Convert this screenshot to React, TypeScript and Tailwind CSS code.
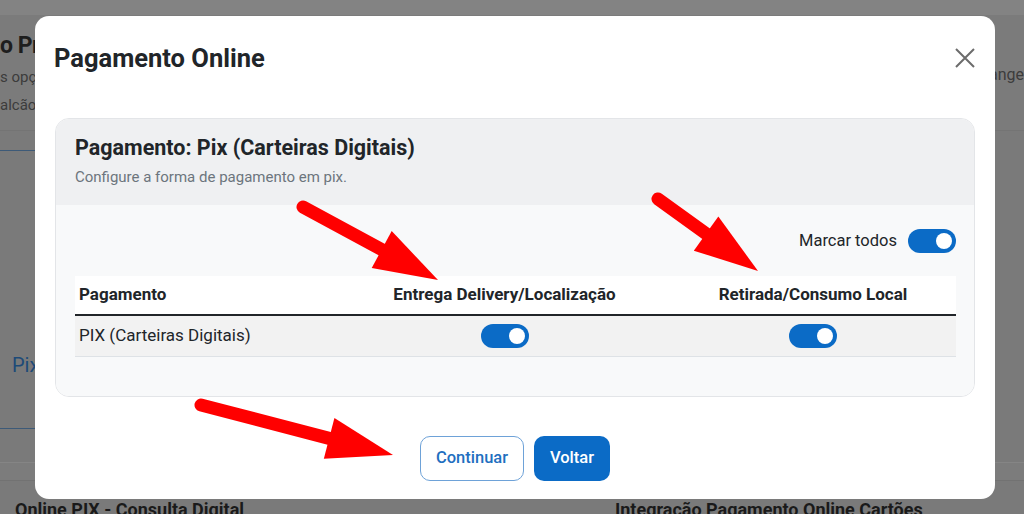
import React from "react";

type Pt = [number, number];

function Arrow({ tail, tip, headLen, headHalf, width }: { tail: Pt; tip: Pt; headLen: number; headHalf: number; width: number }) {
  const dx = tip[0] - tail[0];
  const dy = tip[1] - tail[1];
  const len = Math.hypot(dx, dy);
  const ux = dx / len;
  const uy = dy / len;
  const px = -uy;
  const py = ux;
  const bx = tip[0] - ux * headLen;
  const by = tip[1] - uy * headLen;
  const p1: Pt = [bx + px * headHalf, by + py * headHalf];
  const p2: Pt = [bx - px * headHalf, by - py * headHalf];
  const sx = bx + ux * 4;
  const sy = by + uy * 4;
  return (
    <g>
      <line x1={tail[0]} y1={tail[1]} x2={sx} y2={sy} stroke="#ff0000" strokeWidth={width} strokeLinecap="round" />
      <polygon points={`${tip[0]},${tip[1]} ${p1[0]},${p1[1]} ${p2[0]},${p2[1]}`} fill="#ff0000" />
    </g>
  );
}

function Toggle() {
  return (
    <div className="w-[48px] h-[24px] rounded-full bg-[#0b6bc6] flex items-center justify-end pr-[4px]">
      <div className="w-[16px] h-[16px] rounded-full bg-white" />
    </div>
  );
}

export default function App() {
  return (
    <div className="relative w-[1024px] h-[514px] overflow-hidden bg-[#7a7a7a] font-['Roboto',sans-serif]">
      {/* background page */}
      <div className="h-[15px] bg-[#838383]" />
      <div className="h-[116px] flex justify-between bg-[#7b7b7b] border-b border-[#747474]">
        <div className="pt-[16px]">
          <div className="text-[23px] leading-[30px] font-bold text-[#1e1e1e] tracking-[-0.5px]">o Pr</div>
          <div className="text-[15px] leading-[24px] text-[#3c3c3c] mt-[4px]">s opçõ</div>
          <div className="text-[15px] leading-[24px] text-[#3c3c3c] mt-[4px]">alcão</div>
        </div>
        <div className="pt-[48px] text-[16px] leading-[24px] text-[#3c3c3c]">ange</div>
      </div>
      <div className="h-[331px] bg-[#7a7a7a]">
        <div className="h-[19px]" />
        <div className="h-px bg-[#3d5a78] w-[60px]" />
        <div className="h-[200px]" />
        <div className="pl-[12px] text-[20px] leading-[28px] text-[#1d4a78]">Pix</div>
        <div className="h-[49px]" />
        <div className="h-px bg-[#3d5a78] w-[60px]" />
      </div>
      <div className="h-[18px] border-t border-[#858585] bg-[#7c7c7c]" />
      <div className="flex h-[34px] border-t border-[#727272]">
        <div className="w-[575px] bg-[#7a7a7a] pl-[15px] pt-[18px] text-[18px] font-bold text-[#1a1a1a] leading-[22px]">Online PIX - Consulta Digital</div>
        <div className="w-[20px]" />
        <div className="flex-1 bg-[#7a7a7a] pl-[20px] pt-[18px] text-[18px] font-bold text-[#1a1a1a] leading-[22px]">Integração Pagamento Online Cartões</div>
      </div>

      {/* modal */}
      <div className="absolute left-[35px] top-[16px] w-[960px] h-[483px] bg-white rounded-[14px] flex flex-col">
        <div className="flex justify-between pl-[19px] pr-[20px] pt-[26px] h-[76px] items-start">
          <div className="text-[25.5px] leading-[32px] font-bold text-[#212529]">Pagamento Online</div>
          <svg width="20" height="20" viewBox="0 0 20 20" className="mt-[6px]">
            <path d="M1 1 L19 19 M19 1 L1 19" stroke="#6c6c6c" strokeWidth="2" />
          </svg>
        </div>
        <div className="px-[20px] pt-[26px]">
          <div className="rounded-[14px] border border-[#e3e5e8] overflow-hidden">
            <div className="bg-[#eff0f2] pl-[19px] pt-[15px] h-[86px]">
              <div className="text-[21.5px] leading-[28px] font-bold text-[#212529]">Pagamento: Pix (Carteiras Digitais)</div>
              <div className="text-[15px] leading-[20px] text-[#6c757d] mt-[5px]">Configure a forma de pagamento em pix.</div>
            </div>
            <div className="bg-[#f8f9fa] pl-[19px] pr-[18px] pt-[24px] pb-[39px]">
              <div className="flex justify-end items-center gap-[11px]">
                <span className="text-[16.5px] leading-[24px] text-[#212529]">Marcar todos</span>
                <Toggle />
              </div>
              <div className="mt-[23px]">
                <div className="grid grid-cols-[264px_331px_286px] h-[40px] bg-white border-b-2 border-[#212529] items-center text-[17px] font-bold text-[#212529]">
                  <div className="pl-[4px]">Pagamento</div>
                  <div className="text-center">Entrega Delivery/Localização</div>
                  <div className="text-center">Retirada/Consumo Local</div>
                </div>
                <div className="grid grid-cols-[264px_331px_286px] h-[41px] bg-[#f2f2f2] border-b border-[#dee2e6] items-center text-[17px] text-[#212529]">
                  <div className="pl-[4px]">PIX (Carteiras Digitais)</div>
                  <div className="flex justify-center"><Toggle /></div>
                  <div className="flex justify-center"><Toggle /></div>
                </div>
              </div>
            </div>
          </div>
        </div>
        <div className="flex justify-center gap-[10px] pt-[39px]">
          <button className="w-[104px] h-[45px] rounded-[10px] border border-[#6ea2d8] text-[#1f6fc0] text-[16.5px] font-medium bg-white">Continuar</button>
          <button className="w-[76px] h-[45px] rounded-[10px] bg-[#0b6bc6] text-white text-[16.5px] font-medium">Voltar</button>
        </div>
      </div>

      {/* annotation arrows */}
      <svg className="absolute inset-0 pointer-events-none" width="1024" height="514">
        <Arrow tail={[303, 207]} tip={[438, 280]} headLen={64} headHalf={21} width={13} />
        <Arrow tail={[658, 199]} tip={[758, 271]} headLen={64} headHalf={21} width={13} />
        <Arrow tail={[201, 405]} tip={[393, 455]} headLen={66} headHalf={21} width={13} />
      </svg>
    </div>
  );
}
